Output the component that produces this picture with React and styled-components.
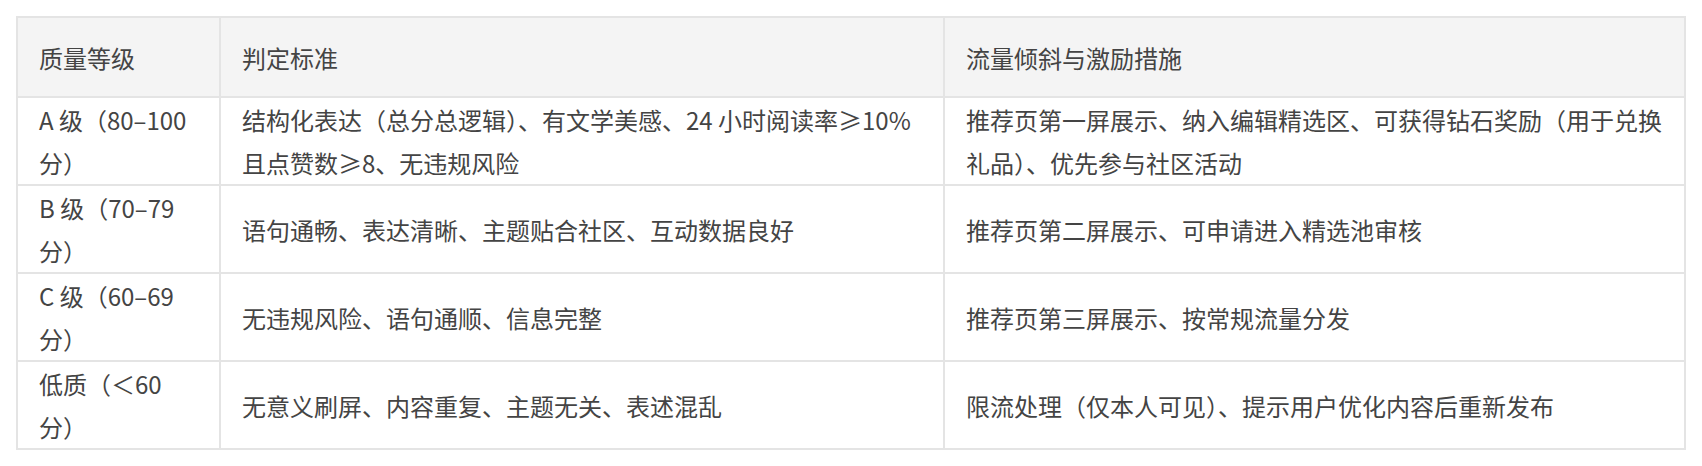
import React from "react";
import styled, { createGlobalStyle } from "styled-components";

const GlobalStyle = createGlobalStyle`
  html, body {
    margin: 0;
    padding: 0;
    background: #fff;
  }
  body {
    font-family: "Noto Sans CJK SC", "Liberation Sans", sans-serif;
  }
`;

const rows = [
  {
    level: "A 级（80–100 分）",
    rule: "结构化表达（总分总逻辑）、有文学美感、24 小时阅读率≥10% 且点赞数≥8、无违规风险",
    reward: "推荐页第一屏展示、纳入编辑精选区、可获得钻石奖励（用于兑换礼品）、优先参与社区活动",
  },
  {
    level: "B 级（70–79 分）",
    rule: "语句通畅、表达清晰、主题贴合社区、互动数据良好",
    reward: "推荐页第二屏展示、可申请进入精选池审核",
  },
  {
    level: "C 级（60–69 分）",
    rule: "无违规风险、语句通顺、信息完整",
    reward: "推荐页第三屏展示、按常规流量分发",
  },
  {
    level: "低质（＜60 分）",
    rule: "无意义刷屏、内容重复、主题无关、表述混乱",
    reward: "限流处理（仅本人可见）、提示用户优化内容后重新发布",
  },
];

export default function App() {
  return (
    <Page>
      <GlobalStyle />
      <Table>
        <Cell $head>质量等级</Cell>
        <Cell $head>判定标准</Cell>
        <Cell $head>流量倾斜与激励措施</Cell>
        {rows.map((r) => (
          <React.Fragment key={r.level}>
            <Cell>{r.level}</Cell>
            <Cell>{r.rule}</Cell>
            <Cell>{r.reward}</Cell>
          </React.Fragment>
        ))}
      </Table>
    </Page>
  );
}

const Page = styled.div`
  padding: 16px;
`;

const Table = styled.div`
  width: 1670px;
  box-sizing: border-box;
  display: grid;
  grid-template-columns: 201px 722px 739px;
  grid-auto-rows: minmax(86px, auto);
  grid-template-rows: 78px;
  gap: 2px;
  padding: 2px;
  background: #e4e4e4;
`;

const Cell = styled.div`
  display: flex;
  align-items: center;
  padding: 0 20px 0 21px;
  background: ${(p) => (p.$head ? "#f4f4f4" : "#fff")};
  color: #444;
  font-size: 24px;
  line-height: 43px;
  word-break: break-all;
`;
